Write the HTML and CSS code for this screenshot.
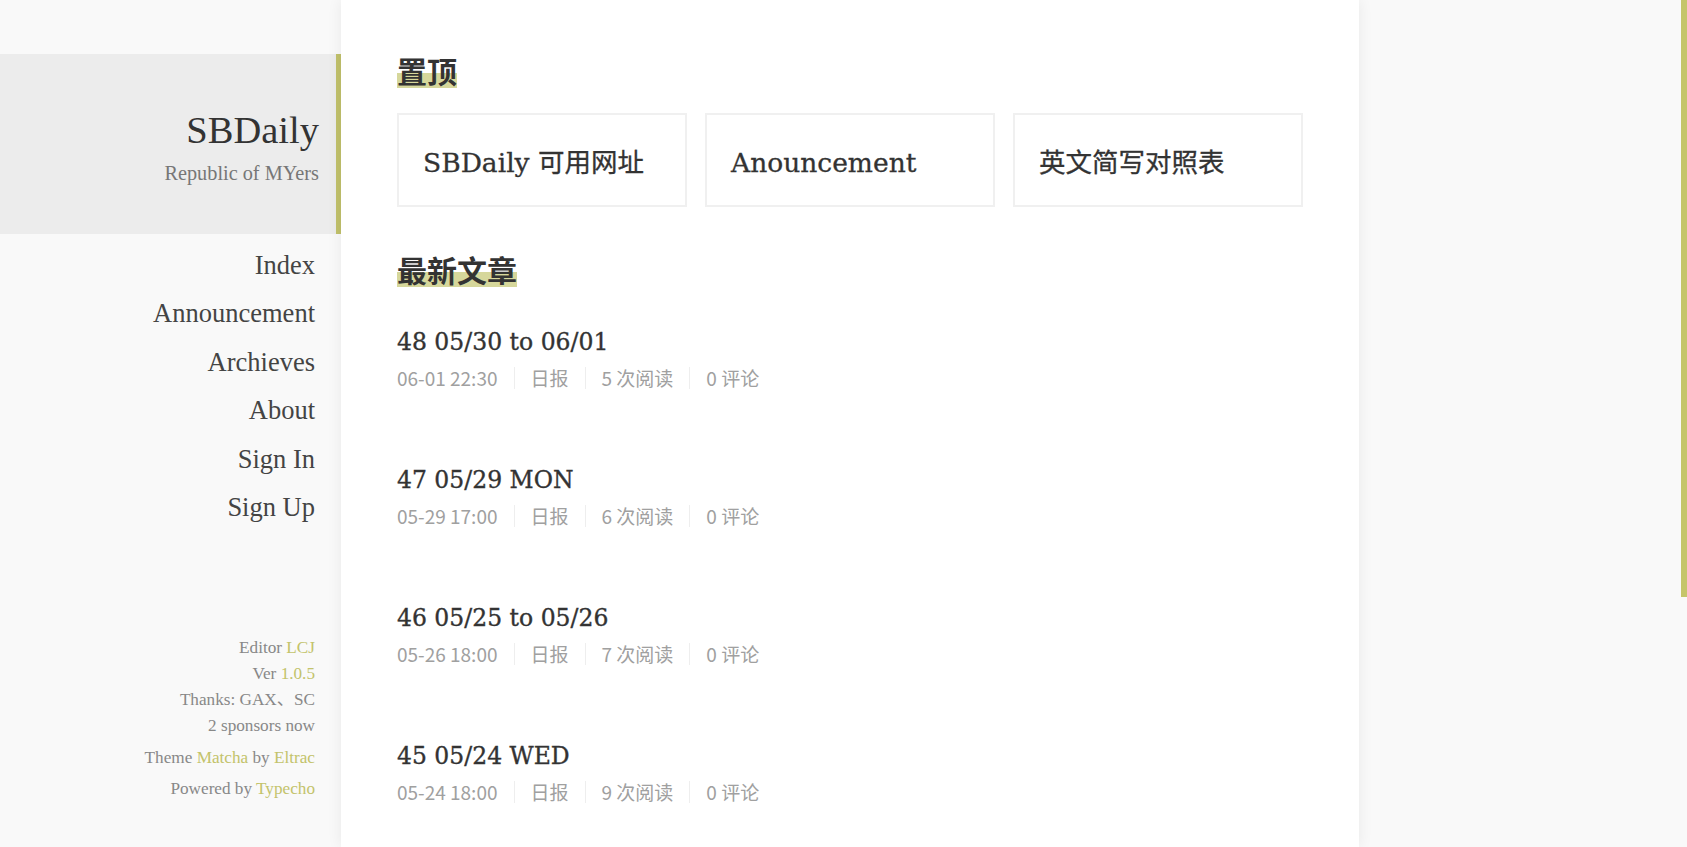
FILE: index.html
```html
<!DOCTYPE html>
<html lang="zh-CN">
<head>
<meta charset="utf-8">
<title>SBDaily</title>
<link rel="stylesheet" href="styles.css">
</head>
<body>
<div class="page">
  <aside class="sidebar">
    <header class="brand">
      <div class="brand-title">SBDaily</div>
      <div class="brand-sub">Republic of MYers</div>
    </header>
    <nav class="nav">
      <a href="#">Index</a>
      <a href="#">Announcement</a>
      <a href="#">Archieves</a>
      <a href="#">About</a>
      <a href="#">Sign In</a>
      <a href="#">Sign Up</a>
    </nav>
    <footer class="side-foot">
      <div class="foot-line">Editor <a href="#">LCJ</a></div>
      <div class="foot-line">Ver <a href="#">1.0.5</a></div>
      <div class="foot-line">Thanks: GAX、SC</div>
      <div class="foot-line">2 sponsors now</div>
      <div class="foot-line foot-gap">Theme <a href="#">Matcha</a> by <a href="#">Eltrac</a></div>
      <div class="foot-line foot-gap">Powered by <a href="#">Typecho</a></div>
    </footer>
  </aside>

  <main class="content">
    <h2 class="section-title first"><span class="mark">置顶</span></h2>
    <div class="cards">
      <a class="card" href="#">SBDaily 可用网址</a>
      <a class="card" href="#">Anouncement</a>
      <a class="card" href="#">英文简写对照表</a>
    </div>

    <h2 class="section-title"><span class="mark">最新文章</span></h2>

    <article class="post">
      <h3 class="post-title">48 05/30 to 06/01</h3>
      <div class="meta"><span>06-01 22:30</span><span>日报</span><span>5 次阅读</span><span>0 评论</span></div>
    </article>
    <article class="post">
      <h3 class="post-title">47 05/29 MON</h3>
      <div class="meta"><span>05-29 17:00</span><span>日报</span><span>6 次阅读</span><span>0 评论</span></div>
    </article>
    <article class="post">
      <h3 class="post-title">46 05/25 to 05/26</h3>
      <div class="meta"><span>05-26 18:00</span><span>日报</span><span>7 次阅读</span><span>0 评论</span></div>
    </article>
    <article class="post">
      <h3 class="post-title">45 05/24 WED</h3>
      <div class="meta"><span>05-24 18:00</span><span>日报</span><span>9 次阅读</span><span>0 评论</span></div>
    </article>
  </main>
</div>
<div class="scroll-thumb"></div>
</body>
</html>
```
FILE: styles.css
```css
html, body {
  margin: 0;
  padding: 0;
  height: 100%;
  overflow: hidden;
}
body {
  background: #f9f9f9;
  color: #333;
  font-family: "Liberation Serif", "Noto Sans CJK SC", serif;
}
a { text-decoration: none; color: inherit; }

.page {
  display: flex;
  align-items: stretch;
  height: 100vh;
}

/* Sidebar */
.sidebar {
  width: 341px;
  flex: none;
  display: flex;
  flex-direction: column;
  height: 100vh;
}
.brand {
  margin-top: 54px;
  background: #ececec;
  border-right: 5px solid #c1c16b;
  padding: 54px 17px 48px 0;
  text-align: right;
}
.brand-title {
  font-size: 38.5px;
  line-height: 44px;
  color: #333;
}
.brand-sub {
  margin-top: 8px;
  font-size: 20.3px;
  line-height: 26px;
  color: #777;
}
.nav {
  display: flex;
  flex-direction: column;
  align-items: flex-end;
  padding: 6.5px 26px 0 0;
}
.nav a {
  font-size: 26.5px;
  line-height: 48.6px;
  color: #444;
}
.side-foot {
  margin-top: auto;
  padding: 0 26px 45px 0;
  text-align: right;
  font-size: 17.2px;
  color: #888;
}
.foot-line {
  line-height: 26px;
}
.foot-gap {
  margin-top: 5.5px;
}
.side-foot a {
  color: #c3c36b;
}

/* Main */
.content {
  width: 1018px;
  flex: none;
  box-sizing: border-box;
  background: #fff;
  box-shadow: 0 0 14px rgba(0, 0, 0, 0.07);
  padding: 50px 56px 0 56px;
  position: relative;
  z-index: 1;
}
.section-title {
  margin: 42px 0 0 0;
  font-family: "Noto Sans CJK SC", sans-serif;
  font-size: 30px;
  line-height: 40px;
  font-weight: 700;
  color: #333;
}
.section-title.first {
  margin-top: 0;
}
.mark {
  background: linear-gradient(to bottom, transparent 56%, #d6d79b 56%, #d6d79b 90%, transparent 90%);
}

.cards {
  display: grid;
  grid-template-columns: repeat(3, 1fr);
  gap: 18px;
  margin-top: 23px;
}
.card {
  display: block;
  border: 2px solid #f0f0f0;
  padding: 33px 24px 27px 24px;
  font-family: "DejaVu Serif", "Noto Sans CJK SC", serif;
  font-size: 26.5px;
  line-height: 30px;
  color: #333;
  white-space: nowrap;
  -webkit-text-stroke: 0.3px #333;
}

.post {
  margin-top: 36px;
}
.post + .post {
  margin-top: 74px;
}
.post-title {
  margin: 0;
  font-family: "DejaVu Serif", "Noto Sans CJK SC", serif;
  font-weight: 400;
  font-size: 23.5px;
  line-height: 34px;
  color: #333;
  -webkit-text-stroke: 0.35px #333;
}
.meta {
  display: flex;
  margin-top: 8px;
  font-family: "Noto Sans CJK SC", sans-serif;
  font-size: 19px;
  line-height: 22px;
  color: #a0a0a0;
}
.meta span {
  padding: 0 16px;
}
.meta span:first-child {
  padding-left: 0;
}
.meta span + span {
  border-left: 1px solid #eeeeee;
}

.scroll-thumb {
  position: fixed;
  top: 0;
  right: 0;
  width: 6px;
  height: 597px;
  background: #c5c56a;
  z-index: 5;
}
```
